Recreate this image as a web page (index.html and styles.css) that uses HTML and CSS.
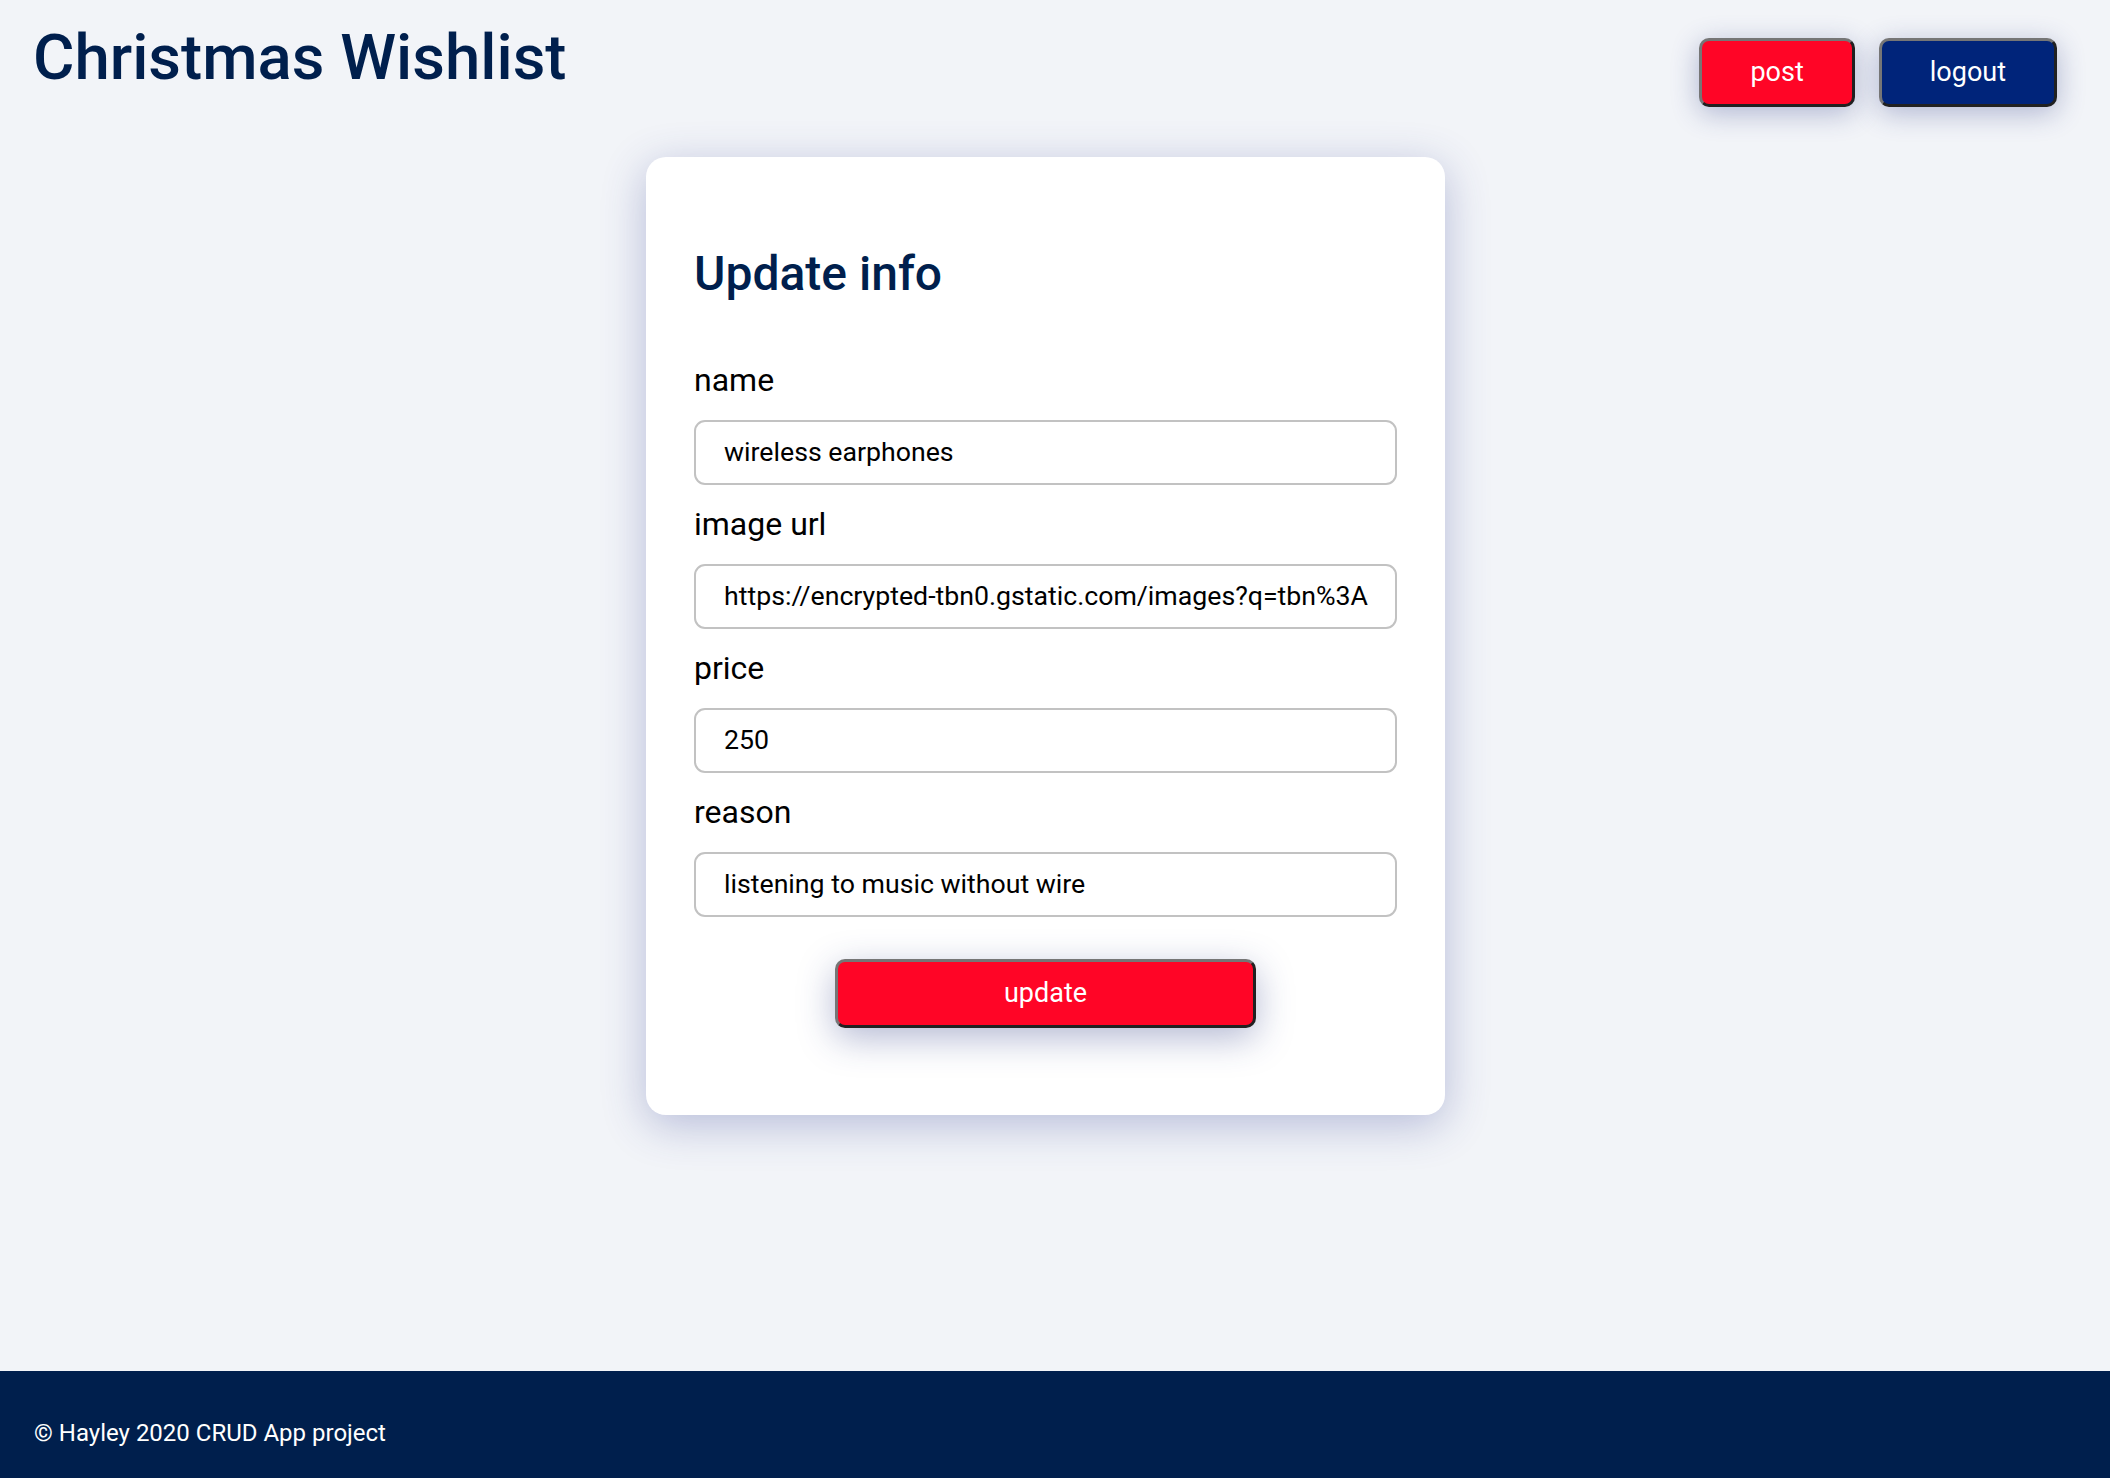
FILE: index.html
```html
<!DOCTYPE html>
<html lang="en">
<head>
<meta charset="utf-8">
<title>Christmas Wishlist</title>
<link rel="stylesheet" href="styles.css">
</head>
<body>
<div class="page">
  <header class="header">
    <h1 class="site-title">Christmas Wishlist</h1>
    <nav class="nav">
      <button class="btn btn-red">post</button>
      <button class="btn btn-navy">logout</button>
    </nav>
  </header>
  <main class="main">
    <form class="card">
      <h2 class="card-title">Update info</h2>
      <label class="field-label" for="name">name</label>
      <input class="field-input" id="name" type="text" value="wireless earphones">
      <label class="field-label" for="url">image url</label>
      <input class="field-input" id="url" type="text" value="https://encrypted-tbn0.gstatic.com/images?q=tbn%3A">
      <label class="field-label" for="price">price</label>
      <input class="field-input" id="price" type="text" value="250">
      <label class="field-label" for="reason">reason</label>
      <input class="field-input" id="reason" type="text" value="listening to music without wire">
      <div class="actions">
        <button class="btn btn-red btn-wide" type="button">update</button>
      </div>
    </form>
  </main>
  <footer class="footer">© Hayley 2020 CRUD App project</footer>
</div>
</body>
</html>
```
FILE: styles.css
```css
* { box-sizing: border-box; }
html, body { margin: 0; padding: 0; }
body {
  background: #f2f4f8;
  font-family: Roboto, "Liberation Sans", Arial, sans-serif;
  color: #000;
}
.page {
  min-height: 100vh;
  display: flex;
  flex-direction: column;
}
.header {
  display: flex;
  justify-content: space-between;
  align-items: flex-start;
  padding: 22px 53px 0 33px;
}
.site-title {
  margin: 0;
  font-size: 63.5px;
  line-height: 72px;
  font-weight: 500;
  color: #001f4d;
}
.nav {
  display: flex;
  gap: 24px;
  margin-top: 16px;
}
.btn {
  font-family: Roboto, "Liberation Sans", Arial, sans-serif;
  font-size: 27px;
  line-height: 31px;
  color: #fff;
  border: 3px outset #767676;
  border-radius: 10px;
  padding: 16px 48px;
  box-shadow: 0 6px 28px rgba(40, 55, 130, 0.33);
  cursor: pointer;
}
.btn-red { background: #ff0526; }
.btn-navy { background: #00247a; }
.main {
  flex: 1;
}
.card {
  width: 799px;
  margin: 50px 0 0 calc(50% - 409px);
  background: #fff;
  border-radius: 20px;
  padding: 89px 48px 87px;
  display: flex;
  flex-direction: column;
  box-shadow: 0 10px 44px rgba(45, 60, 145, 0.3);
}
.card-title {
  margin: 0 0 59px;
  font-size: 48px;
  line-height: 56px;
  font-weight: 500;
  color: #001f4d;
}
.field-label {
  font-size: 32px;
  line-height: 38px;
  margin-bottom: 21px;
}
.field-input {
  height: 65px;
  border: 2px solid #c2c2c2;
  border-radius: 11px;
  padding: 0 14px 2px 28px;
  font-family: Roboto, "Liberation Sans", Arial, sans-serif;
  font-size: 26.7px;
  color: #000;
  background: #fff;
  margin-bottom: 20px;
  outline: none;
}
.actions {
  display: flex;
  justify-content: center;
  margin-top: 22px;
}
.btn-wide {
  width: 60%;
  padding: 16px 0;
  height: 69px;
  box-shadow: 0 10px 36px rgba(40, 55, 130, 0.35);
}
.footer {
  background: #001f4d;
  color: #fff;
  font-size: 24px;
  line-height: 28px;
  padding: 48px 34px 31px;
}
```
